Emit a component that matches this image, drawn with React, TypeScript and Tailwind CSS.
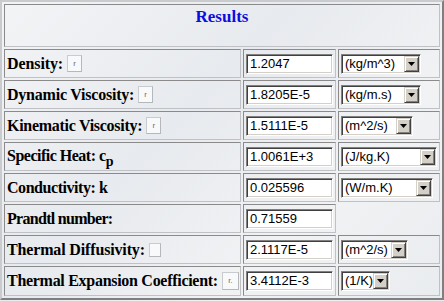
import React from "react";

type Row = {
  label: React.ReactNode;
  track: string;
  box?: "r" | "empty" | "rdot" | "none";
  boxCls?: string;
  value: string;
  unit?: string;
  unitW?: string;
  h?: string;
};

const rows: Row[] = [
  { label: "Density:", track: "tracking-[-0.1px]", box: "r", boxCls: "w-[15px] h-[17px]", value: "1.2047", unit: "(kg/m^3)", unitW: "w-[80px]" },
  { label: "Dynamic Viscosity:", track: "tracking-[-0.22px]", box: "r", boxCls: "w-[15px] h-[17px]", value: "1.8205E-5", unit: "(kg/m.s)", unitW: "w-[80px]" },
  { label: "Kinematic Viscosity:", track: "tracking-[-0.28px]", box: "r", boxCls: "w-[15px] h-[17px]", value: "1.5111E-5", unit: "(m^2/s)", unitW: "w-[72px]" },
  {
    label: (
      <>
        Specific Heat: c
        <span className="inline-block text-[14px] leading-[14px] relative top-[5px] tracking-normal">p</span>
      </>
    ),
    track: "tracking-[-0.5px] relative top-[-1px]",
    box: "none",
    value: "1.0061E+3",
    unit: "(J/kg.K)",
    unitW: "w-[96px]",
  },
  { label: "Conductivity: k", track: "tracking-[-0.45px]", box: "none", value: "0.025596", unit: "(W/m.K)", unitW: "w-[92px]" },
  { label: "Prandtl number:", track: "tracking-[-0.7px]", box: "none", value: "0.71559" },
  { label: "Thermal Diffusivity:", track: "tracking-[-0.15px]", box: "empty", boxCls: "w-[12px] h-[14px]", value: "2.1117E-5", unit: "(m^2/s)", unitW: "w-[67px]" },
  { label: "Thermal Expansion Coefficient:", track: "tracking-[-0.29px]", box: "rdot", boxCls: "w-[17px] h-[18px]", value: "3.4112E-3", unit: "(1/K)", unitW: "w-[49px]", h: "h-[30px]" },
];

const cell =
  "border border-t-[#8a8a8a] border-l-[#8a8a8a] border-b-[#bfc1c4] border-r-[#bfc1c4]";

const sunken =
  "border border-t-[#808080] border-l-[#808080] border-b-white border-r-white shadow-[inset_1px_1px_0_#404040,inset_-1px_-1px_0_#d4d0c8] bg-white";

function SmallBox({ kind, cls }: { kind: Row["box"]; cls?: string }) {
  if (!kind || kind === "none") return null;
  return (
    <span
      className={`ml-[4px] shrink-0 inline-flex items-center justify-center border border-t-[#c9cbce] border-l-[#c9cbce] border-b-[#b5b7ba] border-r-[#b5b7ba] bg-[#f8f9fa] text-[8px] leading-none text-[#6f6f6f] font-['Liberation_Sans',sans-serif] font-normal ${cls}`}
    >
      {kind === "r" ? "r" : kind === "rdot" ? "r." : ""}
    </span>
  );
}

function Select({ text, w }: { text: string; w?: string }) {
  return (
    <div className={`flex h-[20px] p-[1px] ${sunken} ${w}`}>
      <span className="flex-1 pl-[2px] text-[13px] leading-[16px] text-black font-['Liberation_Sans',sans-serif] whitespace-nowrap overflow-hidden">
        {text}
      </span>
      <span className="flex w-[15px] h-[16px] items-center justify-center bg-[#d4d0c8] border border-t-[#d4d0c8] border-l-[#d4d0c8] border-b-[#404040] border-r-[#404040] shadow-[inset_1px_1px_0_#ffffff,inset_-1px_-1px_0_#808080]">
        <svg width="7" height="4" viewBox="0 0 7 4">
          <polygon points="0,0 7,0 3.5,4" fill="#000" />
        </svg>
      </span>
    </div>
  );
}

export default function App() {
  return (
    <div className="w-[444px] h-[301px] overflow-hidden bg-[#eceef1] bg-[linear-gradient(135deg,#f3f4f6_0%,#e7eaee_40%,#f1f2f4_70%,#e9ecef_100%)]">
      <div className="w-[444px] border-2 border-t-[#c9cbce] border-l-[#c9cbce] border-b-[#7f7f7f] border-r-[#7f7f7f] p-[2px] grid grid-cols-[237px_93px_102px] gap-[2px] font-['Liberation_Serif',serif]">
        <div className={`col-span-3 h-[43px] ${cell} flex justify-center pt-[2px]`}>
          <span className="text-[17px] leading-[20px] font-bold text-[#0d0de0]">Results</span>
        </div>
        {rows.map((r, i) => (
          <React.Fragment key={i}>
            <div className={`${r.h ?? "h-[29px]"} ${cell} flex items-center pl-[2px]`}>
              <span className={`text-[16px] leading-[18px] font-bold text-black whitespace-nowrap ${r.track}`}>{r.label}</span>
              <SmallBox kind={r.box} cls={r.boxCls} />
            </div>
            <div className={`${r.h ?? "h-[29px]"} ${cell} flex items-center pl-[2px]`}>
              <div className={`w-[87px] h-[20px] ${sunken} pl-[3px] text-[13px] leading-[18px] text-black font-['Liberation_Sans',sans-serif]`}>
                {r.value}
              </div>
            </div>
            {r.unit ? (
              <div className={`${r.h ?? "h-[29px]"} ${cell} flex items-center pl-[2px]`}>
                <Select text={r.unit} w={r.unitW} />
              </div>
            ) : (
              <div className={r.h ?? "h-[29px]"} />
            )}
          </React.Fragment>
        ))}
      </div>
    </div>
  );
}
